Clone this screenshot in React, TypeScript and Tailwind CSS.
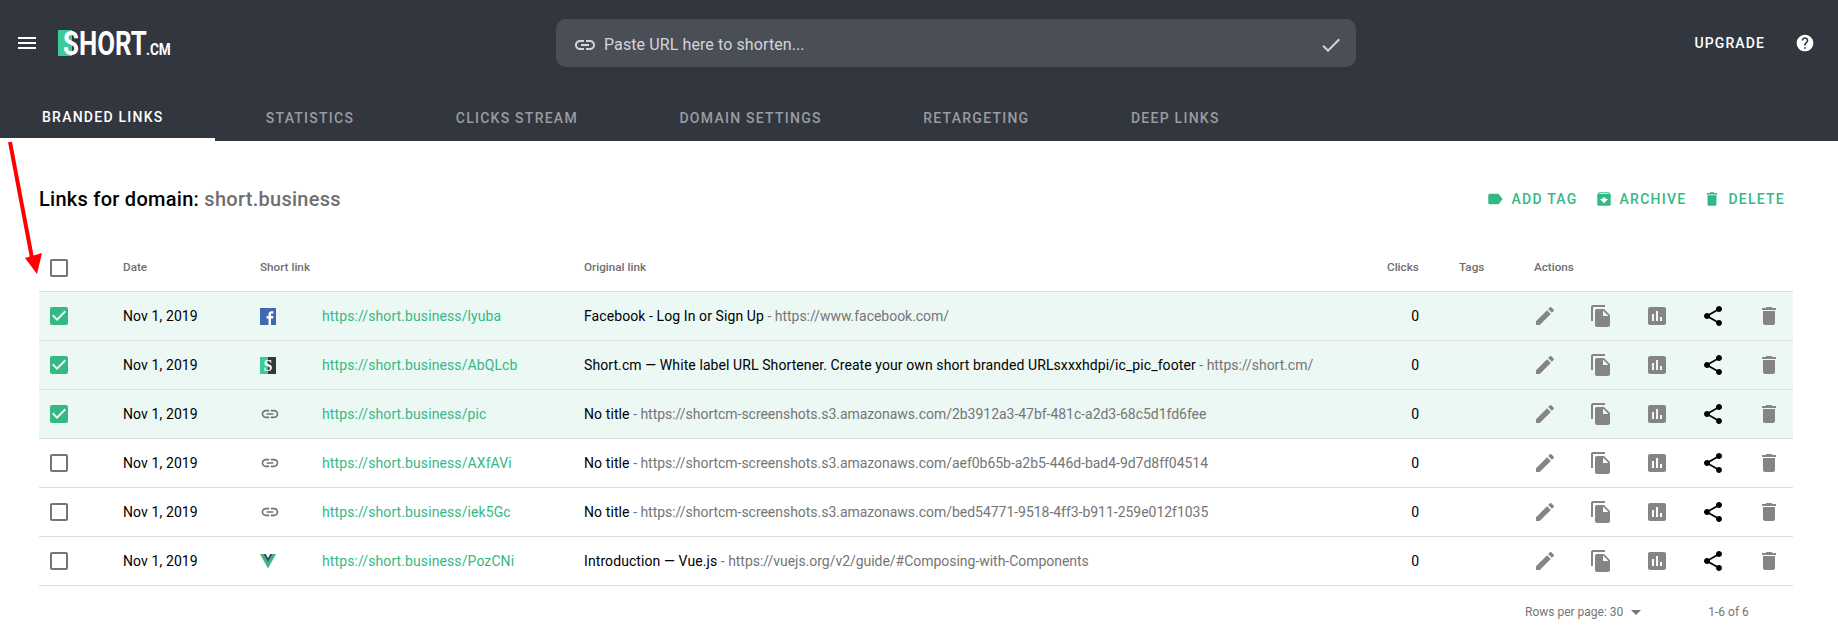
import React from 'react';
import {
  MdMenu, MdLink, MdCheck, MdHelp, MdLabel, MdArchive, MdDelete, MdEdit,
  MdFileCopy, MdAssessment, MdShare, MdArrowDropDown, MdCheckBoxOutlineBlank, MdCheckBox,
} from 'react-icons/md';

const columns = 'grid grid-cols-[84px_137px_62px_262px_803px_72px_75px_1fr] items-center';

const FacebookIcon = () => (
  <svg width="16" height="17" viewBox="0 0 16 17" className="block">
    <rect width="16" height="17" fill="#4267b2" />
    <path d="M11 17v-6.5h2l.4-2.4H11V6.700c0-.8.3-1.200 1.200-1.200h1.200V3.300c-.5-.1-1.100-.1-1.800-.1-1.900 0-3.100 1.100-3.100 3.200v1.700H6.500v2.400h2V17z" fill="#fff" />
  </svg>
);

const ShortIcon = () => (
  <div className="relative flex h-[17px] w-4">
    <div className="w-[8px] bg-[#3ec99b]" />
    <div className="w-[8px] bg-[#32363f]" />
    <span className="absolute inset-0 text-center font-['Liberation_Serif',serif] text-[16px] font-bold leading-[17px] text-white">S</span>
  </div>
);

const VueIcon = () => (
  <svg width="16" height="15" viewBox="0 0 16 15" className="block">
    <polygon points="0,0 3.200,0 8,8.200 12.800,0 16,0 8,14.500" fill="#41b883" />
    <polygon points="3.200,0 5.700,0 8,4 10.300,0 12.800,0 8,8.200" fill="#35495e" />
  </svg>
);

const LinkIcon = () => <MdLink className="text-[20px] text-[#6f7278]" />;

const rows = [
  { icon: <FacebookIcon />, slug: 'lyuba', title: 'Facebook - Log In or Sign Up', url: 'https://www.facebook.com/', checked: true },
  { icon: <ShortIcon />, slug: 'AbQLcb', title: 'Short.cm — White label URL Shortener. Create your own short branded URLsxxxhdpi/ic_pic_footer', url: 'https://short.cm/', checked: true },
  { icon: <LinkIcon />, slug: 'pic', title: 'No title', url: 'https://shortcm-screenshots.s3.amazonaws.com/2b3912a3-47bf-481c-a2d3-68c5d1fd6fee', checked: true },
  { icon: <LinkIcon />, slug: 'AXfAVi', title: 'No title', url: 'https://shortcm-screenshots.s3.amazonaws.com/aef0b65b-a2b5-446d-bad4-9d7d8ff04514', checked: false },
  { icon: <LinkIcon />, slug: 'iek5Gc', title: 'No title', url: 'https://shortcm-screenshots.s3.amazonaws.com/bed54771-9518-4ff3-b911-259e012f1035', checked: false },
  { icon: <VueIcon />, slug: 'PozCNi', title: 'Introduction — Vue.js', url: 'https://vuejs.org/v2/guide/#Composing-with-Components', checked: false },
];

const tabs = ['Statistics', 'Clicks stream', 'Domain settings', 'Retargeting', 'Deep links'];

const Check = ({ checked }: { checked: boolean }) =>
  checked ? (
    <MdCheckBox className="ml-[8px] text-[24px] text-[#34b985]" />
  ) : (
    <MdCheckBoxOutlineBlank className="ml-[8px] text-[24px] text-[#757575]" />
  );

export default function App() {
  return (
    <div className="relative h-[635px] overflow-hidden bg-white font-['Roboto',sans-serif]">
      <header className="h-[141px] bg-[#32363f]">
        <div className="flex h-[86px] items-center">
          <MdMenu className="ml-[15px] text-[24px] text-white" />
          <div className="relative ml-[19px] flex h-[26px] w-[114px] items-end whitespace-nowrap pl-[5px] font-bold leading-[26px] text-white">
            <div className="absolute left-0 top-0 h-[26px] w-[14px] bg-[#3ec99b]" />
            <span className="relative block w-[83px] origin-left scale-x-[.76] text-[34px]">SHORT</span>
            <span className="-mb-[2px] block w-[26px] origin-left scale-x-[.85] text-[16px] leading-[16px]">.CM</span>
          </div>
          <div className="ml-[384px] flex h-[48px] w-[800px] items-center rounded-[10px] bg-[#4a4e57] pl-[17px] pr-[13px] pt-[3px] text-[#d4d5d8]">
            <MdLink className="text-[24px]" />
            <span className="ml-[7px] flex-1 text-[16px] tracking-[.1px]">Paste URL here to shorten...</span>
            <MdCheck className="text-[24px]" />
          </div>
          <div className="ml-auto flex items-center">
            <span className="text-[14px] font-medium uppercase tracking-[1.1px] text-white">Upgrade</span>
            <MdHelp className="ml-[30px] mr-[23px] text-[20px] text-white" />
          </div>
        </div>
        <nav className="mt-[7px] flex h-[48px] text-[14px] font-medium uppercase tracking-[1.25px] text-[#9a9ca1]">
          <div className="flex h-full w-[215px] items-center border-b-[3px] border-white pl-[42px] pt-[3px] text-white">Branded links</div>
          {tabs.map(tab => (
            <div key={tab} className="flex h-full items-center px-[50.8px] pt-[3px]">{tab}</div>
          ))}
        </nav>
      </header>

      <main className="pl-[39px] pr-[45px]">
        <div className="mt-[44px] flex h-[28px] items-center">
          <h1 className="text-[20px] font-medium tracking-[.27px] text-black">
            Links for domain: <span className="text-[#6f6f6f]">short.business</span>
          </h1>
          <div className="ml-auto flex items-center text-[14px] font-medium uppercase tracking-[1.25px] text-[#34b985]">
            <MdLabel className="text-[18px]" />
            <span className="ml-[7px]">Add tag</span>
            <MdArchive className="ml-[17px] text-[18px]" />
            <span className="ml-[7px]">Archive</span>
            <MdDelete className="ml-[17px] text-[18px]" />
            <span className="ml-[7px] mr-[8px]">Delete</span>
          </div>
        </div>

        <div className={`${columns} mt-[30px] h-[49px] border-b border-[#dedede] pt-px text-[11.7px] font-medium text-[#6f6f6f]`}>
          <Check checked={false} />
          <span>Date</span>
          <span className="col-span-2">Short link</span>
          <span>Original link</span>
          <span>Clicks</span>
          <span>Tags</span>
          <span>Actions</span>
        </div>

        {rows.map(row => (
          <div key={row.slug} className={`${columns} h-[49px] border-b border-[#dedede] text-[14px] ${row.checked ? 'bg-[#ecf8f4]' : ''}`}>
            <Check checked={row.checked} />
            <span className="tracking-[.1px] text-black">Nov 1, 2019</span>
            <div>{row.icon}</div>
            <span className="tracking-[.1px] text-[#34b985]">https://short.business/{row.slug}</span>
            <span className="whitespace-nowrap tracking-[.09px] text-black">
              {row.title} <span className="tracking-[-.03px] text-[#757575]">- {row.url}</span>
            </span>
            <span className="w-[32px] text-right text-black">0</span>
            <span />
            <div className="-ml-px flex gap-[32px] text-[24px] text-[#858585]">
              <MdEdit />
              <MdFileCopy />
              <MdAssessment />
              <MdShare className="text-black" />
              <MdDelete />
            </div>
          </div>
        ))}

        <div className="mt-[14px] flex items-center text-[12px] text-[#757575]">
          <span className="ml-[1486px]">Rows per page: 30</span>
          <MdArrowDropDown className="ml-[1px] text-[24px]" />
          <span className="ml-[60px]">1-6 of 6</span>
        </div>
      </main>

      <svg className="pointer-events-none absolute left-0 top-0" width="60" height="290">
        <line x1="10" y1="142" x2="32" y2="258" stroke="#ff0000" strokeWidth="4" />
        <polygon points="25,258 42,253 37,274" fill="#ff0000" />
      </svg>
    </div>
  );
}
